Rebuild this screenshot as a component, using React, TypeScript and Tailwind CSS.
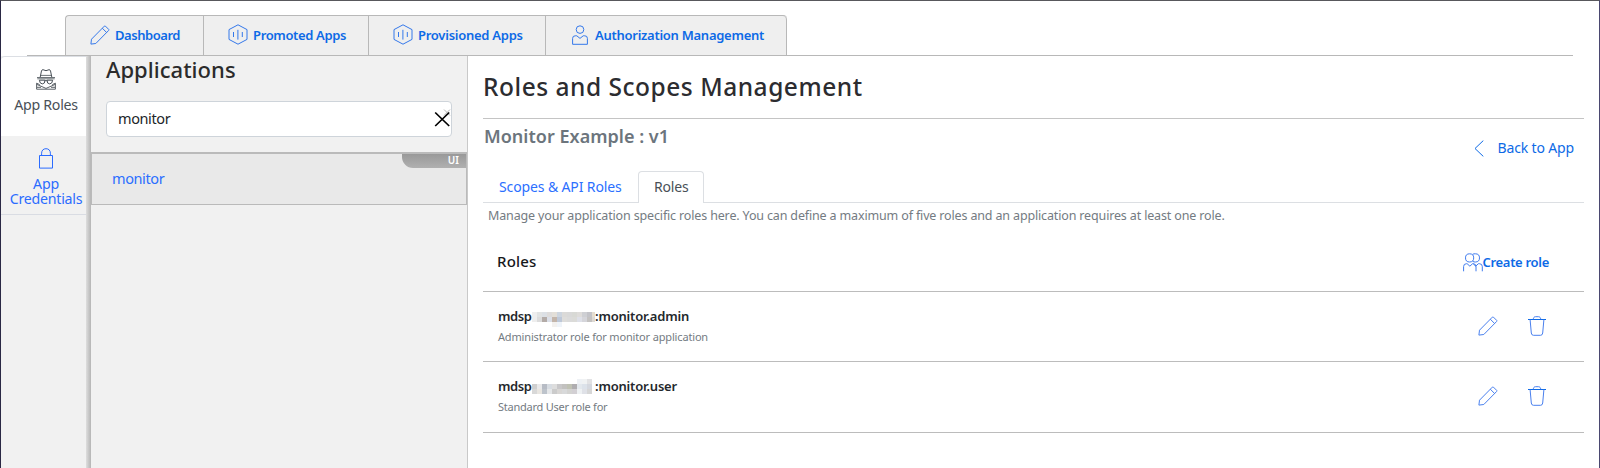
import type { ReactNode } from "react";

type IconProps = { className?: string };

function Pencil({ className = "" }: IconProps) {
  return (
    <svg viewBox="0 0 20 20" className={`h-5 w-5 shrink-0 ${className}`} fill="none" stroke="currentColor" strokeWidth="1" strokeLinejoin="round">
      <path d="M.9 19.1 1.5 14.2 14.4 1.1q.5-.5 1 0l3.3 3.3q.5.5 0 1L5.8 18.5.9 19.1Z" />
      <path d="m12.3 3.2 4.3 4.3" />
    </svg>
  );
}

function Hexagon() {
  return (
    <svg viewBox="0 0 20 21" className="h-[21px] w-5 shrink-0" fill="none" stroke="currentColor" strokeWidth="1" strokeLinejoin="round">
      <path d="M10 .8 19 5.6v9.8l-9 4.8-9-4.8V5.6L10 .8Z" />
      <path d="M5.5 8v5M9.9 5.8v9.8M14.3 8v5" />
    </svg>
  );
}

function Person() {
  return (
    <svg viewBox="0 0 16 20" className="h-5 w-4 shrink-0" fill="none" stroke="currentColor" strokeWidth="1" strokeLinejoin="round">
      <circle cx="8" cy="4.6" r="3.8" />
      <path d="M.6 19.3v-5.9q0-2.6 2.6-2.6h1.6L8 13.4l3.2-2.6h1.6q2.6 0 2.6 2.6v5.9H.6Z" />
    </svg>
  );
}

function People() {
  return (
    <svg viewBox="0 0 20 19" className="h-[19px] w-5 shrink-0 text-[#3f7bee]" fill="none" stroke="currentColor" strokeWidth="1" strokeLinejoin="round">
      <circle cx="6.6" cy="4.9" r="4.1" />
      <path d="M9.6 1.3Q11 .6 12.4.8a4.1 4.1 0 0 1 0 8.2q-1.4.1-2.8-.7" />
      <path d="M.6 18.3v-4.7q0-2.9 2.9-2.9h.6l2.8 2.5 2.7-2.5h.5q2.9 0 2.9 2.9v4.7" />
      <path d="m10.3 10.9 2.4 2.3 2.7-2.5h1q2.9 0 2.9 2.9v4.7" />
    </svg>
  );
}

function Trash() {
  return (
    <svg viewBox="0 0 18 20" className="h-5 w-[18px] shrink-0" fill="none" stroke="currentColor" strokeWidth="1" strokeLinejoin="round">
      <path d="M0 3.5h18" stroke="#0d6ae6" />
      <path d="M5.2 3.3C5.5 1.6 6.2.7 7.4.7h3.2c1.2 0 1.9.9 2.2 2.6" />
      <path d="M2.1 3.6 3.3 17q.2 2.3 2.2 2.3h7q2 0 2.2-2.3l1.2-13.4" />
    </svg>
  );
}

function Lock() {
  return (
    <svg viewBox="0 0 16 21" className="h-[21px] w-4" fill="none" stroke="currentColor" strokeWidth="1">
      <path d="M1.5 7.5h13v12.6h-13z" />
      <path d="M3.6 7.5V5.2C3.6 2.4 5.4.7 8 .7s4.4 1.7 4.4 4.5v2.3" />
    </svg>
  );
}

function Spy() {
  return (
    <svg viewBox="0 0 20 21" className="h-[21px] w-5" fill="none" stroke="currentColor" strokeWidth="1" strokeLinejoin="round">
      <path d="M4.2 8.2 5.5 1.8Q5.8.7 7 .7l3 1 3-1q1.2 0 1.5 1.1l1.3 6.4" />
      <path d="M4.6 6.4h10.8M1 8.5h18M1.3 9.8h17.4" strokeWidth=".8" />
      <path d="M3.3 11.2h5.6q.3 3.7-2.6 3.7-2.5 0-3-3.7ZM11.1 11.2h5.6q-.5 3.7-3 3.7-2.9 0-2.6-3.7ZM8.9 11.7h2.2" />
      <path d="M3.7 15.6.6 14.2v6h18.8v-6l-3.1 1.4M.8 15.4 10 19.4l9.2-4M1 18.3h4M15 18.3h4" strokeWidth=".9" />
    </svg>
  );
}

const navTabs: { label: string; icon: ReactNode; box: string; text: string }[] = [
  { label: "Dashboard", icon: <Pencil />, box: "w-[138px] pl-[24px] gap-[5px]", text: "tracking-[-0.45px]" },
  { label: "Promoted Apps", icon: <Hexagon />, box: "w-[165px] pl-[24px] gap-[5px]", text: "tracking-[-0.36px]" },
  { label: "Provisioned Apps", icon: <Hexagon />, box: "w-[177px] pl-[24px] gap-[5px]", text: "tracking-[-0.26px]" },
  { label: "Authorization Management", icon: <Person />, box: "w-[241px] pl-[26px] gap-[7px]", text: "tracking-[-0.27px]" },
];

function Header() {
  return (
    <header className="ml-[26px] mr-[26px] flex h-[55px] shrink-0 items-end border-b border-[#b8b8b8] pl-[38px]">
      <nav className="flex h-[40px] overflow-hidden rounded-t-[4px] border-l border-t border-[#b8b8b8] bg-[#efefef]">
        {navTabs.map((t) => (
          <a key={t.label} className={`flex h-full items-center border-r border-[#b8b8b8] pb-[2px] text-[#0d6ae6] last:rounded-tr-[4px] ${t.box}`}>
            <span className="text-[#3478ea]">{t.icon}</span>
            <span className={`pt-px text-[13px] font-semibold leading-5 ${t.text}`}>{t.label}</span>
          </a>
        ))}
      </nav>
    </header>
  );
}

function Sidebar() {
  return (
    <aside className="relative flex w-[90px] shrink-0 flex-col bg-[#f1f1f1] text-center text-[14.2px]">
      <div className="flex h-[80px] flex-col items-center rounded-t-[4px] border-t border-[#dcdfe4] bg-white pt-[12px] text-[#495057]">
        <Spy />
        <span className="mt-[5px] leading-5 tracking-[-0.3px]">App Roles</span>
      </div>
      <div className="flex h-[79px] flex-col items-center border-b border-[#d9dce3] pt-[12px] text-[#2b6cff]">
        <Lock />
        <span className="mt-[7px] leading-[15px] tracking-[-0.25px]">
          App
          <br />
          Credentials
        </span>
      </div>
      <div className="absolute inset-y-0 right-0 w-[5px] bg-gradient-to-r from-[#dedede] to-[#b5b5b5]" />
    </aside>
  );
}

function Applications() {
  return (
    <section className="flex w-[377px] shrink-0 flex-col border-r border-[#c9c9c9] bg-[#f1f1f1]">
      <h2 className="ml-[15px] text-[22px] font-medium leading-[26px] tracking-[0.03px] text-[#2b2b2b]">Applications</h2>
      <div className="ml-[15px] mt-[19px] flex h-[36px] w-[346px] items-center justify-between rounded-[4px] border border-[#ced4da] bg-white pl-[11px]">
        <span className="pb-[2px] text-[14.5px] leading-5 tracking-[-0.4px] text-[#212529]">monitor</span>
        <svg viewBox="0 0 17 20" className="h-5 w-[17px]" fill="none">
          <path d="m10 .5 6 6m0-6-6 6" stroke="#a3a3a3" strokeWidth=".8" />
          <path d="m1.2 3.5 14 13.5m0-13.5-14 13.5" stroke="#000" strokeWidth="1.7" />
        </svg>
      </div>
      <div className="relative mt-[15px] flex h-[53px] items-center border border-t-2 border-[#bababa] bg-[#e9e9e9] pb-[2px] pl-[20px]">
        <span className="text-[14.5px] leading-5 tracking-[-0.4px] text-[#2b6fff]">monitor</span>
        <span className="absolute right-0 top-0 h-[14px] w-[64px] rounded-bl-[11px] bg-gradient-to-b from-[#999] to-[#b0b0b0] pr-[7px] text-right text-[10px] font-semibold leading-[12px] text-white">
          UI
        </span>
      </div>
    </section>
  );
}

const adminMosaic = [
  ["#eeeeee", "#e1e3e3", "#dce0e5", "#dedcdb", "#e3dfd8", "#cdd5df", "#dbdad8", "#d9d9d9", "#d8d9d5", "#dedcda", "#cecfd3", "#c3c3c8", "#e5ded2"],
  ["#eeeeee", "#dcdcdc", "#b3aba7", "#dbdfe8", "#c3b5aa", "#bec8d8", "#dedddb", "#dbdbdb", "#dbdbd8", "#dee0e8", "#d5d5da", "#c4c2c1", "#dcd8d3"],
  ["#ffffff", "#ffffff", "#ffffff", "#ffffff", "#f3f1ef", "#eff4fa", "#ffffff", "#ffffff", "#ffffff", "#ffffff", "#ffffff", "#ffffff", "#ffffff"],
];
const userMosaic = [
  ["#ffffff", "#ffffff", "#ffffff", "#ffffff", "#ffffff", "#ffffff", "#ffffff", "#ffffff", "#ffffff", "#eef1f5", "#f0f2f3", "#e2e2e4", "#ffffff"],
  ["#cfcfcf", "#e9e9ea", "#b7bcc5", "#d7dce2", "#dddddd", "#c8c7c9", "#c2c1bf", "#bfc1b3", "#afadb0", "#e3e8ed", "#dce2ea", "#d5d8df", "#ffffff"],
  ["#d8d8d8", "#e9e6e1", "#bdc3cb", "#e5e7e9", "#cbcbcb", "#d8d6d4", "#d8d9da", "#d3d3d1", "#d2cfd3", "#eef1f3", "#dfe1e7", "#d6d6d6", "#ffffff"],
];

function Mosaic({ rows, className }: { rows: string[][]; className: string }) {
  return (
    <span className={`flex w-[63px] flex-col overflow-hidden ${className}`}>
      {rows.map((row, i) => (
        <span key={i} className="flex">
          {row.map((c, j) => (
            <span key={j} className="h-[5px] w-[5px] shrink-0" style={{ backgroundColor: c }} />
          ))}
        </span>
      ))}
    </span>
  );
}

const roles = [
  { name: ":monitor.admin", desc: "Administrator role for monitor application", rows: adminMosaic, mosaic: "mt-[6px]", box: "h-[70px]", text: "tracking-[-0.16px]" },
  { name: ":monitor.user", desc: "Standard User role for", rows: userMosaic, mosaic: "mt-[3px]", box: "h-[71px]", text: "tracking-[-0.24px]" },
];

function RoleRow({ role }: { role: (typeof roles)[number] }) {
  return (
    <li className={`flex justify-between border-b border-[#bcbcbc] pl-[15px] pr-[38px] ${role.box}`}>
      <div className="pt-[14px]">
        <div className="flex h-5 items-start text-[13px] font-semibold leading-5 text-[#24282c]">
          <span className="w-[34px] tracking-[-0.45px]">mdsp</span>
          <Mosaic rows={role.rows} className={role.mosaic} />
          <span className="tracking-[-0.19px]">{role.name}</span>
        </div>
        <p className={`pt-px text-[11px] leading-5 text-[#747b82] ${role.text}`}>{role.desc}</p>
      </div>
      <div className="flex gap-[30px] pt-[24px] text-[#4a80ee]">
        <Pencil />
        <Trash />
      </div>
    </li>
  );
}

function RolesPanel() {
  return (
    <main className="flex min-w-0 grow flex-col bg-white pl-[15px] pr-[15px]">
      <h1 className="h-[63px] border-b border-[#c4c4c4] pt-[15px] text-[24.5px] font-medium leading-[32px] tracking-[0.52px] text-[#2c2c30]">
        Roles and Scopes Management
      </h1>
      <div className="flex h-[52px] justify-between pl-px pr-[10px]">
        <h2 className="pt-[4px] text-[18px] font-semibold leading-[26px] tracking-[0.02px] text-[#6c757d]">Monitor Example : v1</h2>
        <a className="mt-[19px] flex h-5 items-center self-start text-[#0d6ae6]">
          <svg viewBox="0 0 10 17" className="mr-[14px] h-[17px] w-[10px]" fill="none" stroke="currentColor" strokeWidth="1">
            <path d="M9.3.6 1 8.5l8.3 7.9" />
          </svg>
          <span className="text-[14px] leading-5 tracking-[-0.15px]">Back to App</span>
        </a>
      </div>
      <div className="flex h-[32px] items-stretch border-b border-[#dcdfe3] pl-[16px] text-[14px] leading-[32px]">
        <a className="w-[139px] tracking-[-0.12px] text-[#2b6fff]">Scopes &amp; API Roles</a>
        <span className="-mb-px w-[66px] rounded-t-[4px] border border-b-0 border-[#dcdfe3] bg-white pl-[15px] leading-[30px] tracking-[-0.2px] text-[#495057]">Roles</span>
      </div>
      <p className="mt-[3px] pl-[5px] text-[12.5px] leading-5 tracking-[-0.15px] text-[#747b82]">
        Manage your application specific roles here. You can define a maximum of five roles and an application requires at least one role.
      </p>
      <div className="flex h-[66px] items-start justify-between border-b border-[#bcbcbc] pl-[14px] pr-[35px] pt-[25px]">
        <h3 className="text-[15px] font-medium leading-5 tracking-[0.15px] text-[#16181b]">Roles</h3>
        <a className="flex items-center pt-px text-[#0d6ae6]">
          <People />
          <span className="-ml-px text-[13px] font-semibold leading-5 tracking-[-0.3px]">Create role</span>
        </a>
      </div>
      <ul>
        {roles.map((r) => (
          <RoleRow key={r.name} role={r} />
        ))}
      </ul>
    </main>
  );
}

export default function App() {
  return (
    <div className="flex h-[468px] w-[1600px] flex-col overflow-hidden border-x border-t border-l-[#2a2844] border-r-[#4a4870] border-t-[#58585c] bg-white font-['Noto_Sans',sans-serif]">
      <Header />
      <div className="flex min-h-0 grow">
        <Sidebar />
        <Applications />
        <RolesPanel />
      </div>
    </div>
  );
}
